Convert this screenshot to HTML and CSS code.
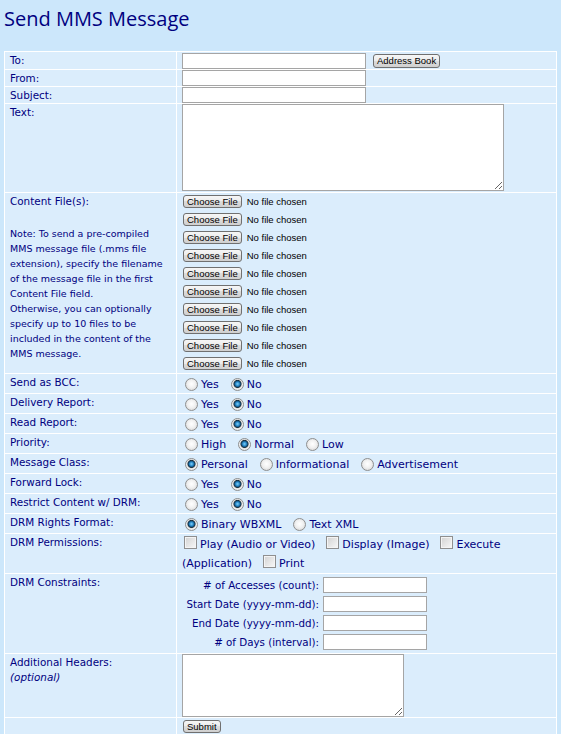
FILE: index.html
```html
<!DOCTYPE html>
<html lang="en">
<head>
  <meta charset="UTF-8" />
  <title>Send MMS Message</title>
  <link rel="stylesheet" href="styles.css">
</head>
<body>
  <h1 class="page-title">Send MMS Message</h1>

  <form class="mms-form" action="#" method="post">
    <table class="form-table">
      <tr>
        <td class="label">To:</td>
        <td class="field field-to">
          <input type="text" class="text-input" name="PhoneNumber"><button type="button" class="btn btn-book">Address Book</button>
        </td>
      </tr>
      <tr>
        <td class="label">From:</td>
        <td class="field"><input type="text" class="text-input" name="MMSFrom"></td>
      </tr>
      <tr>
        <td class="label">Subject:</td>
        <td class="field"><input type="text" class="text-input" name="MMSSubject"></td>
      </tr>
      <tr>
        <td class="label">Text:</td>
        <td class="field field-area"><textarea class="text-area" name="MMSText"></textarea></td>
      </tr>
      <tr>
        <td class="label">
          Content File(s):
          <p class="note">Note: To send a pre-compiled MMS message file (.mms file extension), specify the filename of the message file in the first Content File field.<br>Otherwise, you can optionally specify up to 10 files to be included in the content of the MMS message.</p>
        </td>
        <td class="field field-files">
          <input type="file" class="file-input" name="MMSFile">
          <input type="file" class="file-input" name="MMSFile">
          <input type="file" class="file-input" name="MMSFile">
          <input type="file" class="file-input" name="MMSFile">
          <input type="file" class="file-input" name="MMSFile">
          <input type="file" class="file-input" name="MMSFile">
          <input type="file" class="file-input" name="MMSFile">
          <input type="file" class="file-input" name="MMSFile">
          <input type="file" class="file-input" name="MMSFile">
          <input type="file" class="file-input" name="MMSFile">
        </td>
      </tr>
      <tr>
        <td class="label">Send as BCC:</td>
        <td class="field field-opts">
          <label class="opt"><input type="radio" name="bcc" value="yes">Yes</label><label class="opt"><input type="radio" name="bcc" value="no" checked>No</label>
        </td>
      </tr>
      <tr>
        <td class="label">Delivery Report:</td>
        <td class="field field-opts">
          <label class="opt"><input type="radio" name="delivery" value="yes">Yes</label><label class="opt"><input type="radio" name="delivery" value="no" checked>No</label>
        </td>
      </tr>
      <tr>
        <td class="label">Read Report:</td>
        <td class="field field-opts">
          <label class="opt"><input type="radio" name="read" value="yes">Yes</label><label class="opt"><input type="radio" name="read" value="no" checked>No</label>
        </td>
      </tr>
      <tr>
        <td class="label">Priority:</td>
        <td class="field field-opts">
          <label class="opt"><input type="radio" name="priority" value="high">High</label><label class="opt"><input type="radio" name="priority" value="normal" checked>Normal</label><label class="opt"><input type="radio" name="priority" value="low">Low</label>
        </td>
      </tr>
      <tr>
        <td class="label">Message Class:</td>
        <td class="field field-opts">
          <label class="opt"><input type="radio" name="class" value="personal" checked>Personal</label><label class="opt"><input type="radio" name="class" value="informational">Informational</label><label class="opt"><input type="radio" name="class" value="advertisement">Advertisement</label>
        </td>
      </tr>
      <tr>
        <td class="label">Forward Lock:</td>
        <td class="field field-opts">
          <label class="opt"><input type="radio" name="fwdlock" value="yes">Yes</label><label class="opt"><input type="radio" name="fwdlock" value="no" checked>No</label>
        </td>
      </tr>
      <tr>
        <td class="label">Restrict Content w/ DRM:</td>
        <td class="field field-opts">
          <label class="opt"><input type="radio" name="drm" value="yes">Yes</label><label class="opt"><input type="radio" name="drm" value="no" checked>No</label>
        </td>
      </tr>
      <tr>
        <td class="label">DRM Rights Format:</td>
        <td class="field field-opts">
          <label class="opt"><input type="radio" name="drmformat" value="wbxml" checked>Binary WBXML</label><label class="opt"><input type="radio" name="drmformat" value="xml">Text XML</label>
        </td>
      </tr>
      <tr>
        <td class="label">DRM Permissions:</td>
        <td class="field field-checks">
          <label class="opt"><input type="checkbox" name="drmplay">Play (Audio or Video)</label><label class="opt"><input type="checkbox" name="drmdisplay">Display (Image)</label><label class="opt"><input type="checkbox" name="drmexecute"><span>Execute</span> <span>(Application)</span></label><label class="opt"><input type="checkbox" name="drmprint">Print</label>
        </td>
      </tr>
      <tr>
        <td class="label">DRM Constraints:</td>
        <td class="field">
          <div class="constraints">
            <label for="drmCount"># of Accesses (count):</label>
            <input type="text" class="text-input small-input" id="drmCount">
            <label for="drmStart">Start Date (yyyy-mm-dd):</label>
            <input type="text" class="text-input small-input" id="drmStart">
            <label for="drmEnd">End Date (yyyy-mm-dd):</label>
            <input type="text" class="text-input small-input" id="drmEnd">
            <label for="drmDays"># of Days (interval):</label>
            <input type="text" class="text-input small-input" id="drmDays">
          </div>
        </td>
      </tr>
      <tr>
        <td class="label">Additional Headers:<br><i class="optional">(optional)</i></td>
        <td class="field"><textarea class="text-area headers-area" name="MMSHeaders"></textarea></td>
      </tr>
      <tr>
        <td class="label"></td>
        <td class="field field-submit"><button type="submit" class="btn">Submit</button></td>
      </tr>
    </table>
  </form>
</body>
</html>
```

FILE: styles.css
```css
:root {
  --page-bg: #cce7fb;
  --cell-bg: #dbedfc;
  --navy: #000080;
  --input-border: #a5a5a5;
}

html, body {
  background: var(--page-bg);
}

body {
  margin: 0 4px;
  font-family: "DejaVu Sans", Verdana, sans-serif;
  color: var(--navy);
}

.page-title {
  margin: 7px 0 20px;
  font-family: "Open Sans", "Noto Sans", sans-serif;
  font-size: 20px;
  font-weight: normal;
  line-height: 24px;
  color: var(--navy);
}

.mms-form {
  margin: 0;
}

.form-table {
  width: 553px;
  table-layout: fixed;
  border-collapse: separate;
  border-spacing: 1px;
  background: #ffffff;
}

.form-table td {
  background: var(--cell-bg);
  vertical-align: top;
}

.label {
  width: 171px;
  box-sizing: border-box;
  padding: 1px 5px 0;
  font-size: 10.4px;
  line-height: 15px;
}

.note {
  margin: 17px 0 0;
  font-size: 9.5px;
  line-height: 15px;
}

.optional {
  font-style: italic;
}

.field {
  padding: 0 5px;
  font-size: 11px;
}

.field-to {
  padding-top: 1px;
}

.field-area {
  padding-bottom: 1px;
}

.text-input {
  box-sizing: border-box;
  width: 184px;
  height: 16px;
  margin: 0;
  padding: 0 2px;
  border: 1px solid var(--input-border);
  background: #ffffff;
  vertical-align: top;
  font: 11px "DejaVu Sans", sans-serif;
}

.small-input {
  width: 104px;
}

.text-area {
  display: block;
  box-sizing: border-box;
  width: 322px;
  height: 87px;
  margin: 0;
  border: 1px solid var(--input-border);
  background: #ffffff;
  font: 11px "DejaVu Sans", sans-serif;
}

.headers-area {
  width: 222px;
  height: 63px;
}

.btn {
  height: 14px;
  margin: 0;
  padding: 0 3px;
  border: 1px solid #707070;
  border-radius: 3px;
  background: linear-gradient(#f6f6f6, #ebebeb 50%, #dddddd 50%, #cfcfcf);
  font: 9.5px "Liberation Sans", Arial, sans-serif;
  line-height: 12px;
  color: #000000;
}

.btn-book {
  margin: 1px 0 0 7px;
  vertical-align: top;
}

.field-files {
  padding: 0 5px 0 0;
}

.file-input {
  display: block;
  width: 250px;
  height: 18px;
  margin: 0;
  padding: 0;
  border: 0;
  background: transparent;
  font: 9.5px "Liberation Sans", Arial, sans-serif;
  line-height: 18px;
  color: #000000;
}

.file-input::file-selector-button {
  height: 13px;
  margin: 0 5px 0 6px;
  padding: 0 3px;
  border: 1px solid #707070;
  border-radius: 3px;
  background: linear-gradient(#f6f6f6, #ebebeb 50%, #dddddd 50%, #cfcfcf);
  font: inherit;
  line-height: 11px;
  color: #000000;
}

.field-opts {
  padding: 2px 5px 0;
  line-height: 17px;
}

.field-checks {
  padding: 1px 5px 0;
  line-height: 19px;
}

.opt {
  margin-right: 9px;
}

.opt input[type="radio"] {
  appearance: none;
  box-sizing: border-box;
  width: 13px;
  height: 13px;
  margin: 0 3px 0 3px;
  border: 1px solid #8e8f8f;
  border-radius: 50%;
  background: radial-gradient(circle at 50% 45%, #ffffff 0, #f1f1f1 45%, #cfcfcf 100%);
  vertical-align: -3px;
}

.opt input[type="radio"]:checked {
  background: radial-gradient(circle at 50% 45%, #7fd0f5 0, #2f8fcf 1.8px, #155a8a 2.8px, #1b2f3d 3.6px, #d9d9d9 4.4px, #f1f1f1 5px, #cfcfcf 100%);
}

.opt input[type="checkbox"] {
  appearance: none;
  box-sizing: border-box;
  width: 13px;
  height: 13px;
  margin: 0 3px 0 2px;
  border: 1px solid #8f8f8f;
  background: linear-gradient(135deg, #d2d2d2, #f8f8f8);
  box-shadow: inset 0 0 0 1px #f4f4f4;
  vertical-align: -1px;
}

.constraints {
  display: grid;
  grid-template-columns: 137px 104px;
  column-gap: 4px;
  row-gap: 3px;
  padding: 3px 0;
}

.constraints label {
  text-align: right;
  font-size: 10.3px;
  line-height: 16px;
}

.field-submit {
  padding: 2px 5px 1px 6px;
}

.field-submit .btn {
  display: block;
  height: 13px;
  line-height: 11px;
}
```
